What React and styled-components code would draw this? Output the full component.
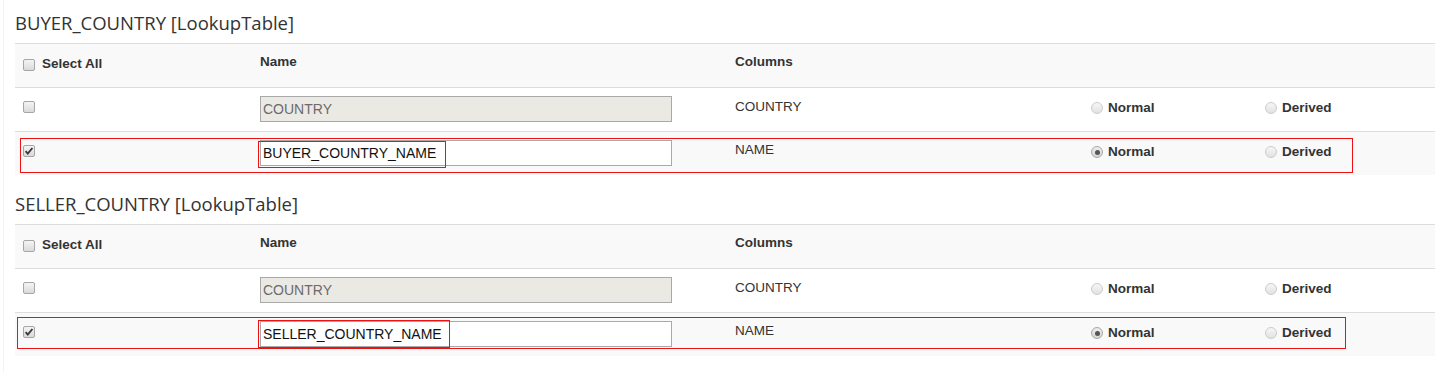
import React from 'react';
import styled, { createGlobalStyle } from 'styled-components';

const GlobalStyle = createGlobalStyle`
  html, body {
    margin: 0;
    padding: 0;
    background: #fff;
  }
  body {
    font-family: "Liberation Sans", Arial, sans-serif;
    font-size: 13.5px;
    color: #333;
  }
`;

const Page = styled.div`
  margin-left: 3px;
  border-left: 1px solid #f3f3f3;
  padding-left: 11px;
  min-height: 372px;
`;

const Section = styled.section`
  margin-bottom: 6px;
`;

const Title = styled.h3`
  margin: 0;
  padding: 10px 0 7px 0;
  height: 26px;
  line-height: 26px;
  font-family: "Open Sans", "Liberation Sans", sans-serif;
  font-weight: 400;
  font-size: 18.5px;
  color: #333;
`;

const Table = styled.div`
  display: grid;
  grid-template-columns: 237px 475px 356px 174px 1fr;
`;

const Row = styled.div`
  position: relative;
  display: grid;
  grid-column: 1 / -1;
  grid-template-columns: subgrid;
  height: 43px;
  border-top: 1px solid #dddddd;
  background: ${({ $shaded }) => ($shaded ? '#f9f9f9' : '#ffffff')};
`;

const Cell = styled.div`
  position: relative;
  display: flex;
  align-items: flex-start;
  gap: ${({ $gap }) => $gap || 0}px;
  padding: ${({ $top }) => $top ?? 8}px 8px 0;
  line-height: 20px;
  font-weight: ${({ $bold }) => ($bold ? 700 : 400)};
  white-space: nowrap;
`;

const Box = styled.span`
  position: relative;
  flex: none;
  box-sizing: border-box;
  width: 12px;
  height: 12px;
  margin-top: ${({ $mt }) => $mt ?? 5}px;
  border: 1px solid #a6a6a6;
  border-radius: 2px;
  background: linear-gradient(#f4f4f4, #dadada);
  display: flex;
  align-items: center;
  justify-content: center;
`;

const Radio = styled.span`
  flex: none;
  box-sizing: border-box;
  width: 12px;
  height: 12px;
  margin-top: 4px;
  border: 1px solid ${({ $checked }) => ($checked ? '#a8a8a8' : '#cccccc')};
  border-radius: 50%;
  background: ${({ $checked }) =>
    $checked ? 'linear-gradient(#ececec, #d6d6d6)' : 'linear-gradient(#f6f6f6, #e2e2e2)'};
  display: flex;
  align-items: center;
  justify-content: center;

  &::after {
    content: '';
    display: ${({ $checked }) => ($checked ? 'block' : 'none')};
    width: 5px;
    height: 5px;
    border-radius: 50%;
    background: #555;
  }
`;

const Input = styled.div`
  box-sizing: border-box;
  width: 412px;
  height: 26px;
  padding: 0 2px;
  border: 1px solid #a9a9a9;
  background: ${({ $disabled }) => ($disabled ? '#ebe9e3' : '#ffffff')};
  color: ${({ $disabled }) => ($disabled ? '#6b6b6b' : '#111')};
  line-height: 24px;
  font-size: 14px;
`;

const Mark = styled.div`
  position: absolute;
  pointer-events: none;
  border: 1px solid #ee1111;
`;

const Check = () => (
  <svg width="10" height="10" viewBox="0 0 10 10">
    <path d="M1.6 5.2 L3.8 7.6 L8.4 2" fill="none" stroke="#3a3a3a" strokeWidth="1.9" />
  </svg>
);

const Checkbox = ({ checked, mt }) => <Box $mt={mt}>{checked && <Check />}</Box>;

const RadioLabel = ({ checked, label }) => (
  <Cell $gap={5} $bold $top={10}>
    <Radio $checked={checked} />
    {label}
  </Cell>
);

const LookupSection = ({ table, derivedName, outer, inner }) => (
  <Section>
    <Title>{table} [LookupTable]</Title>
    <Table>
      <Row $shaded>
        <Cell $gap={7} $bold $top={10}>
          <Checkbox />
          Select All
        </Cell>
        <Cell $bold $top={8}>Name</Cell>
        <Cell $bold $top={8}>Columns</Cell>
        <Cell />
        <Cell />
      </Row>
      <Row>
        <Cell>
          <Checkbox />
        </Cell>
        <Cell>
          <Input $disabled>COUNTRY</Input>
        </Cell>
        <Cell $top={9}>COUNTRY</Cell>
        <RadioLabel label="Normal" />
        <RadioLabel label="Derived" />
      </Row>
      <Row $shaded>
        <Cell>
          <Checkbox checked />
        </Cell>
        <Cell>
          <Input>{derivedName}</Input>
          <Mark style={inner} />
        </Cell>
        <Cell $top={8}>NAME</Cell>
        <RadioLabel label="Normal" checked />
        <RadioLabel label="Derived" />
        <Mark style={outer} />
      </Row>
    </Table>
  </Section>
);

export default function App() {
  return (
    <>
      <GlobalStyle />
      <Page>
        <LookupSection
          table="BUYER_COUNTRY"
          derivedName="BUYER_COUNTRY_NAME"
          outer={{ left: 5, top: 6, width: 1331, height: 33 }}
          inner={{ left: 6, top: 9, width: 186, height: 25 }}
        />
        <LookupSection
          table="SELLER_COUNTRY"
          derivedName="SELLER_COUNTRY_NAME"
          outer={{ left: 2, top: 4, width: 1327, height: 30 }}
          inner={{ left: 6, top: 7, width: 190, height: 26 }}
        />
      </Page>
    </>
  );
}
